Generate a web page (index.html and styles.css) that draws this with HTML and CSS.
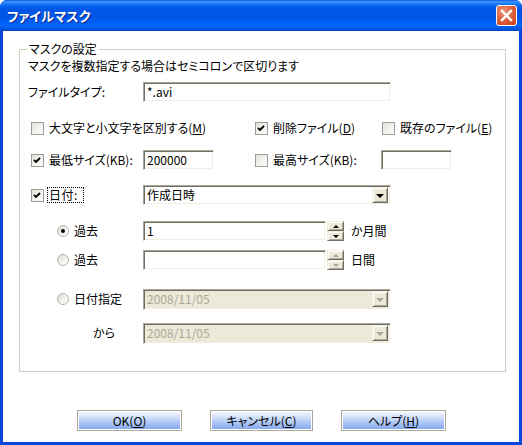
FILE: index.html
```html
<!DOCTYPE html>
<html lang="ja">
<head>
<meta charset="utf-8">
<title>ファイルマスク</title>
<link rel="stylesheet" href="styles.css">
</head>
<body>
<div class="window">
  <div class="titlebar">
    <span class="title">ファイルマスク</span>
    <span class="close"><svg viewBox="0 0 19 19" width="19" height="19"><path d="M5 5 L14 14 M14 5 L5 14" stroke="#fff" stroke-width="2.4" stroke-linecap="square"/></svg></span>
  </div>
  <div class="client">
    <div class="group">
      <span class="legend">マスクの設定</span>
      <div class="row r-desc">マスクを複数指定する場合はセミコロンで区切ります</div>
      <div class="row r-type"><span class="lbl w115">ファイルタイプ:</span><span class="edit w248">*.avi</span></div>
      <div class="row r-checks">
        <span class="opt w224"><span class="chk"></span><span class="txt">大文字と小文字を区別する(<u>M</u>)</span></span>
        <span class="opt w127"><span class="chk on"><svg viewBox="0 0 11 11" width="11" height="11"><path d="M2 5 L4 7 L8 3" fill="none" stroke="#000" stroke-width="1.8"/></svg></span><span class="txt">削除ファイル(<u>D</u>)</span></span>
        <span class="opt"><span class="chk"></span><span class="txt">既存のファイル(<u>E</u>)</span></span>
      </div>
      <div class="row r-size">
        <span class="opt w112"><span class="chk on"><svg viewBox="0 0 11 11" width="11" height="11"><path d="M2 5 L4 7 L8 3" fill="none" stroke="#000" stroke-width="1.8"/></svg></span><span class="txt">最低サイズ(KB):</span></span>
        <span class="edit w71">200000</span>
        <span class="opt w126 gap41"><span class="chk"></span><span class="txt">最高サイズ(KB):</span></span>
        <span class="edit w71"></span>
      </div>
      <div class="row r-date">
        <span class="opt w112"><span class="chk on"><svg viewBox="0 0 11 11" width="11" height="11"><path d="M2 5 L4 7 L8 3" fill="none" stroke="#000" stroke-width="1.8"/></svg></span><span class="txt focus">日付:</span></span>
        <span class="combo w248"><span class="val">作成日時</span><span class="dropbtn"><i class="tri"></i></span></span>
      </div>
      <div class="row r-rad1">
        <span class="opt w86"><span class="rad on"></span><span class="txt">過去</span></span>
        <span class="edit w183">1</span>
        <span class="spin"><span class="sb"><i class="up"></i></span><span class="sb"><i class="dn"></i></span></span>
        <span class="unit">か月間</span>
      </div>
      <div class="row r-rad2">
        <span class="opt w86"><span class="rad"></span><span class="txt">過去</span></span>
        <span class="edit w183"></span>
        <span class="spin dis"><span class="sb"><i class="up"></i></span><span class="sb"><i class="dn"></i></span></span>
        <span class="unit">日間</span>
      </div>
      <div class="row r-rad3">
        <span class="opt w86"><span class="rad"></span><span class="txt">日付指定</span></span>
        <span class="combo w248 disabled"><span class="val">2008/11/05</span><span class="dropbtn"><i class="tri"></i></span></span>
      </div>
      <div class="row r-kara">
        <span class="lbl w50">から</span>
        <span class="combo w248 disabled"><span class="val">2008/11/05</span><span class="dropbtn"><i class="tri"></i></span></span>
      </div>
    </div>
    <div class="buttons">
      <span class="btn b105">OK(<u>O</u>)</span>
      <span class="btn b103">キャンセル(<u>C</u>)</span>
      <span class="btn b105">ヘルプ(<u>H</u>)</span>
    </div>
  </div>
</div>
</body>
</html>
```
FILE: styles.css
```css
html, body {
  margin: 0;
  padding: 0;
  background: #fff;
}
body {
  font-family: "Noto Sans CJK JP", "Liberation Sans", sans-serif;
  font-size: 12px;
  line-height: 1;
  font-feature-settings: "palt";
  color: #000;
}
u { text-decoration: underline; text-underline-offset: 1px; }

.window {
  width: 522px;
  height: 445px;
  background: #0a46dc;
  border-radius: 7px 7px 0 0;
  overflow: hidden;
  display: flex;
  flex-direction: column;
}
.titlebar {
  height: 31px;
  box-sizing: border-box;
  display: flex;
  justify-content: space-between;
  align-items: flex-start;
  padding: 5px 5px 0 7px;
  background: linear-gradient(to bottom, #0a5ee8 0%, #3d95ff 6%, #1a7cf8 12%, #0462ee 20%, #0156e4 30%, #0055e8 55%, #005cf4 70%, #0465fb 82%, #005ae8 92%, #0041c0 100%);
}
.title {
  color: #fff;
  font-weight: bold;
  font-size: 13px;
  margin-top: 4px;
  text-shadow: 1px 1px 0 #0b2a8c;
  letter-spacing: 0.2px;
}
.close {
  width: 19px;
  height: 19px;
  border: 1px solid #fff;
  border-radius: 3px;
  background: radial-gradient(circle at 35% 30%, #f09a7c 0%, #e0623c 45%, #c8401c 100%);
  display: flex;
}
.client {
  flex: 1;
  background: #fff;
  margin: 0 3px 3px 3px;
  display: flex;
  flex-direction: column;
}
.group {
  position: relative;
  margin: 18px 0 0 16px;
  width: 487px;
  height: 323px;
  box-sizing: border-box;
  border: 1px solid #d0d0bf;
  display: flex;
  flex-direction: column;
}
.legend {
  position: absolute;
  top: -8px;
  left: 7px;
  padding: 0 2px;
  background: #fff;
  line-height: 13px;
}
.row {
  display: flex;
  align-items: center;
  height: 20px;
  flex: none;
}
.r-desc { height: 14px; margin-top: 9px; padding-left: 8px; }
.r-type { margin-top: 9px; padding-left: 8px; }
.r-checks { margin-top: 16px; padding-left: 11px; }
.r-size { margin-top: 12px; padding-left: 11px; }
.r-date { margin-top: 15px; padding-left: 11px; }
.r-rad1 { margin-top: 16px; padding-left: 37px; }
.r-rad2 { margin-top: 9px; padding-left: 37px; }
.r-rad3 { margin-top: 19px; padding-left: 37px; }
.r-kara { margin-top: 14px; padding-left: 73px; }

.lbl, .opt { flex: none; display: flex; align-items: center; }
.w115 { width: 115px; }
.w50 { width: 50px; }
.w224 { width: 224px; }
.w127 { width: 127px; }
.w112 { width: 112px; }
.w126 { width: 126px; }
.w86 { width: 86px; }
.gap41 { margin-left: 41px; }

.txt { margin-left: 5px; }
.rad + .txt { margin-left: 5px; }
.focus {
  outline: 1px dotted #000;
  outline-offset: 1px;
  padding-right: 4px;
  letter-spacing: 0.5px;
}

.chk {
  width: 13px;
  height: 13px;
  box-sizing: border-box;
  border: 1px solid #9c9c92;
  background: linear-gradient(135deg, #e2e2da 0%, #f4f4f0 60%, #fff 100%);
  display: flex;
  align-items: center;
  justify-content: center;
  flex: none;
}
.rad {
  width: 12px;
  height: 12px;
  box-sizing: border-box;
  border-radius: 50%;
  border: 1px solid #b4b4aa;
  background: linear-gradient(135deg, #dcdcd4 0%, #f6f6f2 60%, #fff 100%);
  display: flex;
  align-items: center;
  justify-content: center;
  flex: none;
}
.rad.on::after {
  content: "";
  width: 4px;
  height: 4px;
  border-radius: 50%;
  background: #000;
}

.edit, .combo {
  flex: none;
  height: 20px;
  box-sizing: border-box;
  border: 1px solid;
  border-color: #aca899 #fff #fff #aca899;
  box-shadow: inset 1px 1px 0 #716f64, inset -1px -1px 0 #f1efe2;
  background: #fff;
  display: flex;
  align-items: center;
  padding-left: 3px;
}
.w248 { width: 248px; }
.w71 { width: 71px; }
.w183 { width: 183px; }
.combo { justify-content: space-between; padding-right: 2px; }
.r-rad3 .combo, .r-kara .combo { height: 21px; }
.combo.disabled { background: #ece9d8; color: #aca899; }
.dropbtn, .sb {
  box-sizing: border-box;
  background: #ece9d8;
  border: 1px solid;
  border-color: #f1efe2 #716f64 #716f64 #f1efe2;
  box-shadow: inset 1px 1px 0 #fff, inset -1px -1px 0 #aca899;
  display: flex;
  align-items: center;
  justify-content: center;
}
.dropbtn { width: 16px; height: 16px; }
.tri {
  width: 0;
  height: 0;
  border-left: 4px solid transparent;
  border-right: 4px solid transparent;
  border-top: 4px solid #000;
  margin-top: 1px;
}
.disabled .tri { border-top-color: #aca899; }
.spin {
  flex: none;
  margin-left: 1px;
  width: 17px;
  height: 20px;
  display: flex;
  flex-direction: column;
}
.sb { width: 17px; height: 10px; }
.up, .dn {
  width: 0;
  height: 0;
  border-left: 3px solid transparent;
  border-right: 3px solid transparent;
}
.up { border-bottom: 3px solid #000; }
.dn { border-top: 3px solid #000; }
.spin.dis .up { border-bottom-color: #aca899; }
.spin.dis .dn { border-top-color: #aca899; }
.unit { margin-left: 7px; }

.buttons {
  display: flex;
  margin-top: 38px;
  padding-left: 74px;
  gap: 28px;
}
.btn {
  height: 21px;
  box-sizing: border-box;
  border: 1px solid #aca899;
  box-shadow: inset 1px 1px 0 #fff, inset -1px -1px 0 #fff;
  background: linear-gradient(to bottom, #f6f9ff 0%, #dbe6fb 25%, #a9c3f3 65%, #7ea5ec 100%);
  display: flex;
  align-items: center;
  justify-content: center;
}
.b105 { width: 105px; }
.b103 { width: 103px; }
```
